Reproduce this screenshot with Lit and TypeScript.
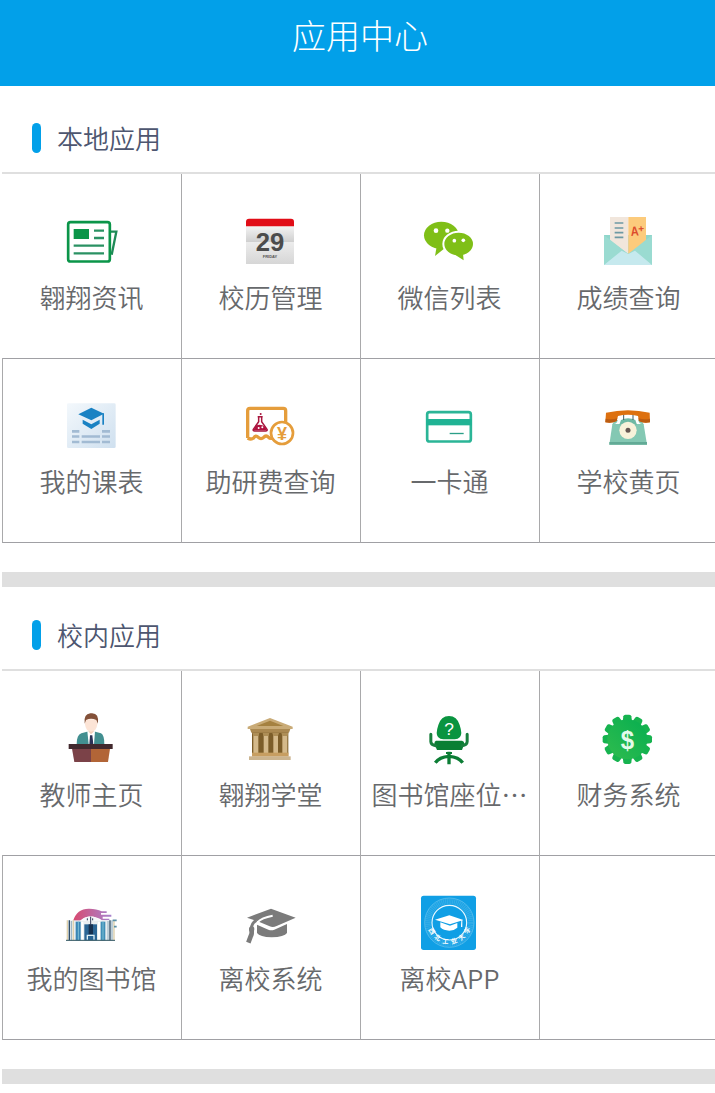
import { LitElement, html, css, svg, nothing, SVGTemplateResult } from 'lit';
import { customElement, property } from 'lit/decorators.js';

interface App {
  name: string;
  icon: string;
}

interface Section {
  title: string;
  apps: App[];
}

const teeth = Array.from({ length: 12 }, (_, i) => i * 30);

// every icon is drawn on a 168 x 168 canvas
const icons: Record<string, SVGTemplateResult> = {
  news: svg`
    <g fill="none" stroke="#0b9549" stroke-width="7">
      <path d="M138 53 H157 L143 122" stroke="#1f8a57" stroke-width="7"/>
      <rect x="12.5" y="24.5" width="125" height="118" rx="7" fill="#fff" stroke-width="8"/>
      <path d="M90 50 H120 M90 72 H120 M29 95 H120 M29 118 H120" stroke="#2a9163" stroke-width="7"/>
    </g>
    <rect x="29" y="45" width="46" height="30" fill="#0b9549"/>`,
  calendar: svg`
    <defs>
      <linearGradient id="page" x1="0" y1="0" x2="0" y2="1">
        <stop offset="0" stop-color="#f4f4f4"/>
        <stop offset=".42" stop-color="#cfcfcf"/>
        <stop offset=".43" stop-color="#ececec"/>
        <stop offset="1" stop-color="#d6d6d6"/>
      </linearGradient>
    </defs>
    <path d="M9 36 H153 V150 H9 Z" fill="url(#page)"/>
    <path d="M9 37 V23 Q9 14 18 14 H144 Q153 14 153 23 V37 Z" fill="#e10d17"/>
    <text x="81" y="111" font-size="77" font-weight="700" fill="#4c4c4c" text-anchor="middle">29</text>
    <text x="81" y="132" font-size="12" font-weight="700" fill="#555" text-anchor="middle">FRIDAY</text>`,
  wechat: svg`
    <g fill="#7fbf17">
      <ellipse cx="58" cy="64" rx="52" ry="41"/>
      <path d="M44 98 L39 126 L68 103 Z"/>
      <ellipse cx="110" cy="90" rx="46" ry="37" stroke="#fff" stroke-width="6"/>
      <path d="M99 122 L125 139 L123 119 Z"/>
    </g>
    <g fill="#fff">
      <circle cx="42" cy="50" r="7"/>
      <circle cx="76" cy="50" r="6.5"/>
      <circle cx="97" cy="80" r="5.5"/>
      <circle cx="124" cy="79" r="5.5"/>
    </g>`,
  grade: svg`
    <rect x="9" y="63" width="144" height="90" fill="#8fd6cb"/>
    <path d="M27 9 H82 V120 L27 80 Z" fill="#f1e6dc"/>
    <path d="M82 9 H135 V80 L82 120 Z" fill="#fccb7c"/>
    <path d="M9 63 L82 120 L153 63 V153 H9 Z" fill="#9adbd1"/>
    <path d="M9 153 L62 110 L82 120 L102 110 L153 153 Z" fill="#c6e9ee"/>
    <path d="M41 27 H67 M41 42 H67 M41 56 H67 M41 70 H67" stroke="#6d99a4" stroke-width="5"/>
    <g fill="#dc4c2c" font-weight="700" transform="rotate(-4 109 50)">
      <text x="89" y="65" font-size="40" textLength="24" lengthAdjust="spacingAndGlyphs">A</text>
      <text x="112" y="55" font-size="30">+</text>
    </g>`,
  schedule: svg`
    <defs>
      <linearGradient id="sheet" x1="0" y1="0" x2="1" y2="1">
        <stop offset="0" stop-color="#f3f8fc"/>
        <stop offset="1" stop-color="#cfe0ef"/>
      </linearGradient>
    </defs>
    <rect x="9" y="16" width="146" height="134" rx="4" fill="url(#sheet)"/>
    <g fill="#1a82c3">
      <path d="M82 29 L120 47 L82 67 L43 49 Z"/>
      <path d="M115 46 H120 V80 H115 Z"/>
      <path d="M56 65 L82 79 L107 65 V77 L82 93 L56 77 Z"/>
    </g>
    <path d="M24 100 H46 M114 100 H138 M24 115.500 H46 M53 115.500 H108 M114 115.500 H138 M24 132 H46 M53 132 H108 M114 132 H138"
      stroke="#a2bbd3" stroke-width="8"/>`,
  research: svg`
    <path d="M14 120 V38 Q14 31 21 31 H121 Q128 31 128 38 V110 M14 120 Q24 126 32 120 Q38 110 46 118 Q54 126 62 118 Q69 110 77 118 Q82 124 92 119"
      fill="none" stroke="#e59d3b" stroke-width="10"/>
    <circle cx="117" cy="105" r="33" fill="#fff" stroke="#e59d3b" stroke-width="8"/>
    <text x="117" y="125" font-size="54" font-weight="700" fill="#e59d3b" text-anchor="middle">¥</text>
    <path d="M44 56 H59 M47 56 V71 L31 94 Q29 99 35 99 H68 Q74 99 72 94 L56 71 V56" fill="none" stroke="#a8173f" stroke-width="4.500"/>
    <path d="M38 84 Q51 76 66 86 L72 97 H31 Z" fill="#b01240"/>
    <circle cx="53" cy="48" r="3" fill="#a8173f"/>
    <circle cx="47" cy="90" r="3" fill="#fff"/>
    <circle cx="58" cy="88" r="3" fill="#fff"/>`,
  card: svg`
    <rect x="15.500" y="42.500" width="131" height="88" rx="7" fill="#fff" stroke="#2bb597" stroke-width="8"/>
    <rect x="13" y="63" width="136" height="19" fill="#20b394"/>
    <path d="M83 106.500 H125" stroke="#2b9f88" stroke-width="4"/>`,
  phone: svg`
    <path d="M42 66 H120 L128 79 L138 140 H25 L34 79 Z" fill="#84c8b3"/>
    <rect x="25" y="132" width="113" height="8" fill="#62aa96"/>
    <path d="M51 60 H111 V64 Q113 78 124 78 H38 Q49 78 51 64 Z" fill="#fff"/>
    <path d="M60 66 Q81 56 103 66 L108 80 H55 Z" fill="#6fb9a4"/>
    <path d="M68 50 V66 M96 50 V66" stroke="#3f5961" stroke-width="3"/>
    <path d="M15 44 Q81 29 146 44 L147 73 Q127 77 114 69 L111 54 Q81 46 51 54 L47 69 Q33 77 13 73 Z" fill="#dd700f"/>
    <path d="M14 62 Q32 66 49 61 L47 69 Q33 77 13 73 Z M147 62 Q130 66 112 61 L114 69 Q127 77 147 73 Z" fill="#bb5c12"/>
    <circle cx="81" cy="97" r="26" fill="#f8f2da"/>
    <circle cx="81" cy="97" r="7.500" fill="#665752"/>`,
  teacher: svg`
    <path d="M38 100 Q38 72 52 67 L69 62 H94 L111 67 Q121 72 121 100 Z" fill="#428f90"/>
    <path d="M70 61 H93 L90 100 H74 Z" fill="#fff"/>
    <path d="M74 50 H89 V62 L81 70 L74 62 Z" fill="#f3cfb9"/>
    <path d="M78 73 H85 L88 100 H76 Z" fill="#2b3155"/>
    <path d="M63 25 H100 V40 Q98 61 81 62 Q65 61 63 40 Z" fill="#fce4d6"/>
    <path d="M62 38 Q58 9 79 7 Q106 3 102 38 L97 27 Q81 20 66 27 Z" fill="#835139"/>
    <path d="M24 113 H81 V153 H31 Z" fill="#7b4248"/>
    <path d="M81 113 H138 L132 153 H81 Z" fill="#b26537"/>
    <rect x="14" y="99" width="132" height="15" fill="#42292e"/>`,
  temple: svg`
    <rect x="27" y="57" width="109" height="70" fill="#7c5d29"/>
    <path d="M81 21 L149 47 V54 H14 V47 Z" fill="#c9ab77"/>
    <path d="M81 29 L121 45 H41 Z" fill="#a58140"/>
    <path d="M21 54 H142 L138 65 H25 Z" fill="#aa8850"/>
    <g fill="#d4b98a">
      <rect x="31" y="66" width="15" height="60"/>
      <rect x="62" y="66" width="14" height="60"/>
      <rect x="91" y="66" width="14" height="60"/>
      <rect x="118" y="66" width="15" height="60"/>
    </g>
    <path d="M28 66 H49 L46 75 H31 Z M59 66 H79 L76 75 H62 Z M88 66 H108 L105 75 H91 Z M115 66 H136 L133 75 H118 Z" fill="#ae8e56"/>
    <rect x="27" y="125" width="110" height="12" fill="#c79e61"/>
    <rect x="18" y="136" width="125" height="11" fill="#cbb48f"/>`,
  chair: svg`
    <path d="M81 15 Q105 15 113 42 Q122 69 114 78 Q108 85 98 85 H64 Q54 85 48 78 Q40 69 49 42 Q57 15 81 15 Z" fill="#0a9440"/>
    <path d="M42 89 H120 Q127 91 127 98 L120 117 H45 L37 98 Q37 91 42 89 Z" fill="#0a7f34"/>
    <path d="M26.500 70 V92 Q27 102 42 104 M135.500 70 V92 Q135 102 120 104" fill="none" stroke="#187f3d" stroke-width="9" stroke-linecap="round"/>
    <path d="M81 122 V160 M40 155 Q52 138 81 136 Q110 138 122 155" fill="none" stroke="#0c7d35" stroke-width="10"/>
    <path d="M72 126 H90" stroke="#0c7d35" stroke-width="6"/>
    <text x="81" y="71" font-size="52" fill="#fff" text-anchor="middle">?</text>`,
  finance: svg`
    <defs>
      <linearGradient id="gear" x1="0" y1="1" x2="1" y2="0">
        <stop offset="0" stop-color="#2fbc4e"/>
        <stop offset="1" stop-color="#07ae50"/>
      </linearGradient>
    </defs>
    <g fill="#16b34f">
      ${teeth.map((angle) => svg`<path d="M64 40 L67 16 Q68 11 73 11 H85 Q90 11 91 16 L94 40 Z" transform="rotate(${angle} 79 85)"/>`)}
    </g>
    <circle cx="79" cy="85" r="60" fill="url(#gear)"/>
    <text x="59" y="113" font-size="80" font-weight="700" fill="#e4fbea" textLength="40" lengthAdjust="spacingAndGlyphs">$</text>`,
  library: svg`
    <defs>
      <linearGradient id="arch">
        <stop offset="0" stop-color="#d84a70"/>
        <stop offset="1" stop-color="#a783cf"/>
      </linearGradient>
    </defs>
    <path d="M27 78 Q39 40 76 41 Q98 41 113 49 H128 V54 H111 V59 H142 V65 H116 V71 H136 V76 H114 Q102 65 79 65 Q58 65 48 78 Z" fill="url(#arch)"/>
    <rect x="9" y="76" width="142" height="60" fill="#e9edf0"/>
    <path d="M49 78 Q80 50 111 78 Z" fill="#f6f7fa"/>
    <path d="M10 76 V136 M28 76 V136 M150 78 V136" stroke="#e0d2ad" stroke-width="4"/>
    <path d="M16 76 V136 M138 76 V136" stroke="#314e67" stroke-width="4"/>
    <path d="M22 78 V136 M132 78 V136 M144 76 V136" stroke="#8faebe" stroke-width="3"/>
    <rect x="35" y="80" width="15" height="56" fill="#3a86b5"/>
    <rect x="110" y="80" width="14" height="56" fill="#3f8eb7"/>
    <path d="M43 80 V136 M117 80 V136" stroke="#7fbfd4" stroke-width="3"/>
    <rect x="61" y="88" width="38" height="48" fill="#2b6595"/>
    <rect x="74" y="88" width="13" height="30" fill="#17304f"/>
    <path d="M80 65 V90 M70 70 V76 M86 70 V76" stroke="#303b59" stroke-width="3"/>
    <path d="M55 80 V136 M105 80 V136" stroke="#fff" stroke-width="6"/>
    <path d="M70 134 V121 H90 V134" fill="none" stroke="#dff0f7" stroke-width="4"/>
    <path d="M6 136 H153" stroke="#2f5561" stroke-width="3"/>
    <path d="M146 76 H158 M150 95 H158" stroke="#5b8fa5" stroke-width="5"/>`,
  leave: svg`
    <g fill="#7b7b7b">
      <path d="M12 68 L84 41 L158 68 L101 93 Q90 98 80 94 L44 79 Z"/>
      <path d="M42 89 L76 104 Q85 108 94 104 L132 87 V114 Q124 126 86 127 Q50 126 42 114 Z"/>
    </g>
    <path d="M89 62 Q56 68 43 82 Q36 90 38 110" fill="none" stroke="#fff" stroke-width="6"/>
    <g fill="none" stroke="#7b7b7b">
      <path d="M40 76 Q26 84 25 102" stroke-width="9"/>
      <path d="M25 100 Q28 116 23 124 L16 143" stroke-width="14"/>
    </g>
    <circle cx="26" cy="102" r="8" fill="#7b7b7b"/>`,
  leaveApp: svg`
    <defs>
      <path id="seal" d="M17 92 A66 66 0 0 0 147 92"/>
    </defs>
    <rect x="-3" y="2" width="165" height="163" rx="8" fill="#109fe5"/>
    <circle cx="82" cy="83" r="64" fill="none" stroke="#5cbcec" stroke-width="17" stroke-dasharray="4 1.500" opacity=".45"/>
    <circle cx="82" cy="83" r="74" fill="none" stroke="#6ec5ef" stroke-width="2"/>
    <circle cx="82" cy="83" r="52" fill="#109fe5" stroke="#e9f8ff" stroke-width="3.500"/>
    <text font-size="19" font-weight="700" fill="#fff" letter-spacing="10">
      <textPath href="#seal" startOffset="12">西北工业大学</textPath>
    </text>
    <g fill="#fff">
      <path d="M82 61 L124 75 L84 88 L39 74 Z"/>
      <path d="M55 82 L84 92 L106 84 V98 Q96 107 82 107 Q64 107 55 97 Z"/>
      <path d="M118 75 H121 V96 H117 Z"/>
    </g>`,
};

@customElement('app-tile')
export class AppTile extends LitElement {
  @property() name = '';
  @property() icon = '';

  static styles = css`
    :host {
      display: flex;
      flex-direction: column;
      align-items: center;
      box-sizing: border-box;
      min-width: 0;
      padding: 40px 8px 0;
    }

    .icon {
      width: 56px;
      height: 56px;
      flex: none;
      overflow: visible;
      font-family: "Liberation Sans", "Noto Sans CJK SC", sans-serif;
    }

    .name {
      max-width: 100%;
      margin-top: 8px;
      margin-right: 1px;
      font-size: 26px;
      line-height: 38px;
      color: #67696c;
      white-space: nowrap;
    }
  `;

  render() {
    return html`
      <svg class="icon" viewBox="0 0 168 168">${icons[this.icon] ?? nothing}</svg>
      <div class="name">${this.name}</div>
    `;
  }
}

@customElement('app-root')
export class AppRoot extends LitElement {
  static styles = css`
    :host {
      display: block;
      box-sizing: border-box;
      height: 1093px;
      overflow: hidden;
      background: #fff;
      font-family: "Noto Sans CJK SC", sans-serif;
      font-weight: 350;
    }

    header {
      display: flex;
      justify-content: center;
      height: 86px;
      margin-bottom: 4px;
      background: #02a0e9;
    }

    h1 {
      margin: 0 0 0 5px;
      font-size: 34px;
      font-weight: 300;
      line-height: 70px;
      color: #fff;
    }

    section {
      margin-left: 2px;
      border-bottom: 15px solid #dfdfdf;
      padding-bottom: 29px;
    }

    h2 {
      display: flex;
      align-items: center;
      box-sizing: border-box;
      height: 84px;
      margin: 0;
      padding: 12px 0 0 30px;
      border-bottom: 2px solid #dfdfdf;
      font-size: 26px;
      font-weight: 350;
      color: #4d5670;
    }

    h2::before {
      content: "";
      width: 9px;
      height: 30px;
      margin-top: 2px;
      margin-right: 16px;
      border-radius: 5px;
      background: #02a0e9;
    }

    .grid {
      display: grid;
      grid-template-columns: repeat(4, 179px);
      grid-auto-rows: 184px;
      padding-left: 1px;
      padding-bottom: 1px;
    }

    app-tile {
      height: 185px;
      border-right: 1px solid #a9a9ab;
      border-bottom: 1px solid #a0a0a4;
    }

    app-tile:nth-child(4n + 1) {
      margin-left: -1px;
      border-left: 1px solid transparent;
    }

    app-tile:nth-child(n + 5):nth-child(4n + 1) {
      border-left-color: #a9a9ab;
    }
  `;

  sections: Section[] = [
    {
      title: '本地应用',
      apps: [
        { name: '翱翔资讯', icon: 'news' },
        { name: '校历管理', icon: 'calendar' },
        { name: '微信列表', icon: 'wechat' },
        { name: '成绩查询', icon: 'grade' },
        { name: '我的课表', icon: 'schedule' },
        { name: '助研费查询', icon: 'research' },
        { name: '一卡通', icon: 'card' },
        { name: '学校黄页', icon: 'phone' },
      ],
    },
    {
      title: '校内应用',
      apps: [
        { name: '教师主页', icon: 'teacher' },
        { name: '翱翔学堂', icon: 'temple' },
        { name: '图书馆座位⋯', icon: 'chair' },
        { name: '财务系统', icon: 'finance' },
        { name: '我的图书馆', icon: 'library' },
        { name: '离校系统', icon: 'leave' },
        { name: '离校APP', icon: 'leaveApp' },
        { name: '', icon: '' },
      ],
    },
  ];

  render() {
    return html`
      <header><h1>应用中心</h1></header>
      ${this.sections.map((section) => html`
        <section>
          <h2>${section.title}</h2>
          <div class="grid">
            ${section.apps.map((app) => html`<app-tile .name=${app.name} .icon=${app.icon}></app-tile>`)}
          </div>
        </section>
      `)}
    `;
  }
}
